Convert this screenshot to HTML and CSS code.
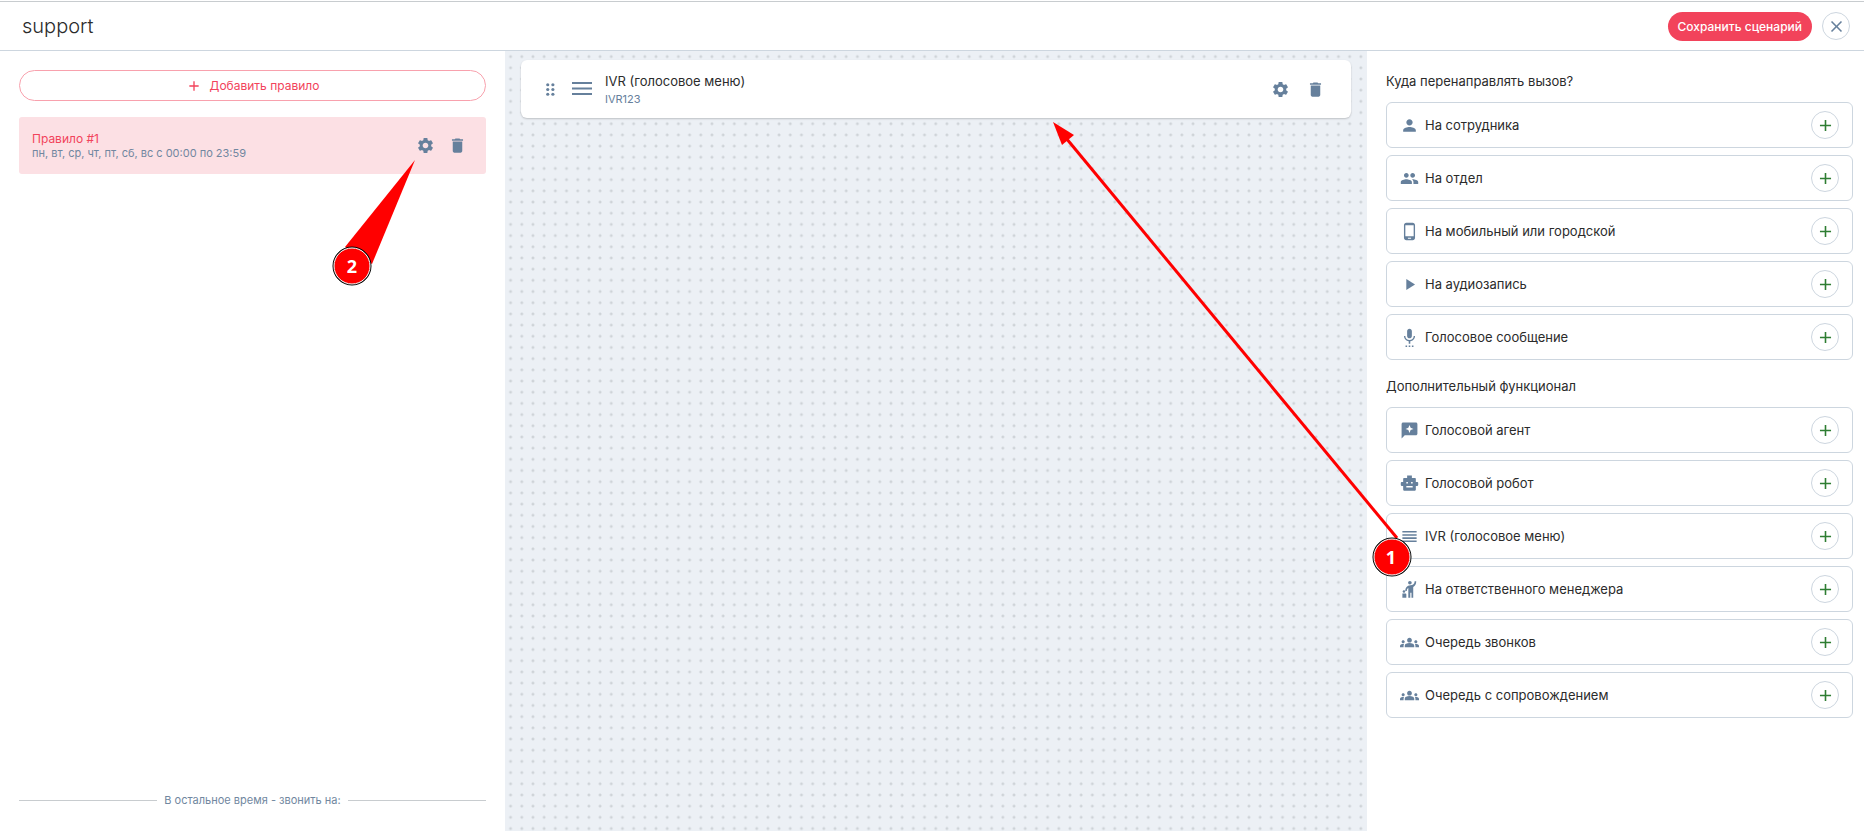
FILE: index.html
```html
<!DOCTYPE html>
<html lang="ru">
<head>
    <meta charset="UTF-8">
    <meta name="viewport" content="width=device-width, initial-scale=1.0">
    <title>support</title>
    <link rel="stylesheet" href="styles.css">
</head>
<body>
    <!-- Icon set -->
    <svg class="sprite" aria-hidden="true">
        <symbol id="settings" viewBox="0 0 24 24"><path d="M19.14 12.94c.04-.3.06-.61.06-.94 0-.32-.02-.64-.07-.94l2.03-1.58c.18-.14.23-.41.12-.61l-1.92-3.32c-.12-.22-.37-.29-.59-.22l-2.39.96c-.5-.38-1.03-.7-1.62-.94l-.36-2.54c-.04-.24-.24-.41-.48-.41h-3.84c-.24 0-.43.17-.47.41l-.36 2.54c-.59.24-1.13.57-1.62.94l-2.39-.96c-.22-.08-.47 0-.59.22L2.74 8.87c-.12.21-.08.47.12.61l2.03 1.58c-.05.3-.09.63-.09.94s.02.64.07.94l-2.03 1.58c-.18.14-.23.41-.12.61l1.92 3.32c.12.22.37.29.59.22l2.39-.96c.5.38 1.03.7 1.62.94l.36 2.54c.05.24.24.41.48.41h3.84c.24 0 .44-.17.47-.41l.36-2.54c.59-.24 1.13-.56 1.62-.94l2.39.96c.22.08.47 0 .59-.22l1.92-3.32c.12-.22.07-.47-.12-.61l-2.01-1.58zM12 15.6c-1.98 0-3.6-1.62-3.6-3.6s1.62-3.6 3.6-3.6 3.6 1.62 3.6 3.6-1.62 3.6-3.6 3.6z"/></symbol>
        <symbol id="delete" viewBox="0 0 24 24"><path d="M6 19c0 1.100.9 2 2 2h8c1.100 0 2-.9 2-2V7H6v12zM19 4h-3.500l-1-1h-5l-1 1H5v2h14V4z"/></symbol>
        <symbol id="add" viewBox="0 0 24 24"><path d="M19 13h-6v6h-2v-6H5v-2h6V5h2v6h6v2z"/></symbol>
        <symbol id="close" viewBox="0 0 24 24"><path d="M19 6.410 17.590 5 12 10.590 6.410 5 5 6.410 10.590 12 5 17.590 6.410 19 12 13.410 17.590 19 19 17.590 13.410 12z"/></symbol>
        <symbol id="drag" viewBox="0 0 24 24"><circle cx="8.500" cy="6" r="2"/><circle cx="15" cy="6" r="2"/><circle cx="8.500" cy="12" r="2"/><circle cx="15" cy="12" r="2"/><circle cx="8.500" cy="18" r="2"/><circle cx="15" cy="18" r="2"/></symbol>
        <symbol id="menu" viewBox="0 0 24 24"><path d="M2 16v2h20v-2H2zm0-5.500v2h20v-2H2zm0-5.500v2h20V5H2z"/></symbol>
        <symbol id="headline" viewBox="0 0 24 24"><path d="M3 15h18v-2H3v2zm0 4h18v-2H3v2zm0-8h18V9H3v2zm0-6v2h18V5H3z"/></symbol>
        <symbol id="person" viewBox="0 0 24 24"><path d="M12 12c2.210 0 4-1.790 4-4s-1.790-4-4-4-4 1.790-4 4 1.790 4 4 4zm0 2c-2.670 0-8 1.340-8 4v2h16v-2c0-2.660-5.330-4-8-4z"/></symbol>
        <symbol id="people" viewBox="0 0 24 24"><path d="M16 11c1.660 0 2.990-1.340 2.990-3S17.660 5 16 5c-1.660 0-3 1.340-3 3s1.340 3 3 3zm-8 0c1.660 0 2.990-1.340 2.990-3S9.660 5 8 5C6.340 5 5 6.340 5 8s1.340 3 3 3zm0 2c-2.330 0-7 1.170-7 3.500V19h14v-2.500c0-2.330-4.670-3.500-7-3.500zm8 0c-.29 0-.62.020-.97.050 1.160.84 1.970 1.970 1.970 3.450V19h6v-2.500c0-2.330-4.670-3.500-7-3.500z"/></symbol>
        <symbol id="phone" viewBox="0 0 24 24"><path d="M16 1H8C6.340 1 5 2.340 5 4v16c0 1.660 1.340 3 3 3h8c1.660 0 3-1.340 3-3V4c0-1.660-1.340-3-3-3zm-2 20h-4v-1h4v1zm3.250-3H6.750V4h10.500v14z"/></symbol>
        <symbol id="play" viewBox="0 0 24 24"><path d="M8 5v14l11-7z"/></symbol>
        <symbol id="voice" viewBox="0 0 24 24"><path d="M12 13c1.660 0 2.990-1.340 2.990-3L15 4c0-1.660-1.340-3-3-3S9 2.340 9 4v6c0 1.660 1.340 3 3 3zm-5 9h2v2H7v-2zm4 0h2v2h-2v-2zm4 0h2v2h-2v-2zM19 10h-1.700c0 3-2.540 5.100-5.300 5.100S6.700 13 6.700 10H5c0 3.410 2.720 6.230 6 6.720V20h2v-3.280c3.280-.49 6-3.310 6-6.720z"/></symbol>
        <symbol id="agent" viewBox="0 0 24 24"><path d="M20 2H4c-1.100 0-2 .9-2 2v18l4-4h14c1.100 0 2-.9 2-2V4c0-1.100-.9-2-2-2zm-6.570 9.430L12 15l-1.430-3.570L7 10l3.570-1.430L12 5l1.430 3.570L17 10l-3.570 1.430z"/></symbol>
        <symbol id="robot" viewBox="0 0 24 24"><path fill-rule="evenodd" d="M9 2h6v3h4c.6 0 1 .4 1 1v4h2c.6 0 1 .4 1 1v3c0 .6-.4 1-1 1h-2v5c0 .6-.4 1-1 1H5c-.6 0-1-.4-1-1v-5H2c-.6 0-1-.4-1-1v-3c0-.6.400-1 1-1h2V6c0-.6.4-1 1-1h4zM8 10v2h2v-2zm6 0v2h2v-2zM8 15v2h8v-2z"/></symbol>
        <symbol id="manager" viewBox="0 0 24 24"><circle cx="12.500" cy="3.500" r="2.300"/><path d="M18.500 1.500h2c0 3.500-1.300 6.100-3.800 7.300V22.500h-2.200V16h-1.500v6.500h-2.500V10.200c-1.200.6-1.900 1.900-1.900 3.800h-2c0-4.500 2.300-7.200 6.400-7.500 3.400-.2 5.500-1.300 5.500-5z"/><circle cx="5" cy="14.500" r="1.600"/><path d="M3 17h3.700c.8 0 1.300.5 1.300 1.300v4.200H3z"/></symbol>
        <symbol id="groups" viewBox="0 0 24 24"><path d="M12 12.750c1.630 0 3.070.39 4.240.9 1.080.48 1.760 1.560 1.760 2.730V18H6v-1.610c0-1.180.68-2.260 1.760-2.730 1.170-.52 2.610-.91 4.240-.91zM4 13c1.100 0 2-.9 2-2s-.9-2-2-2-2 .9-2 2 .9 2 2 2zm1.130 1.100c-.37-.06-.74-.1-1.130-.1-.99 0-1.930.21-2.780.58C.48 14.900 0 15.620 0 16.430V18h4.500v-1.610c0-.83.23-1.610.63-2.290zM20 13c1.100 0 2-.9 2-2s-.9-2-2-2-2 .9-2 2 .9 2 2 2zm4 3.430c0-.81-.48-1.530-1.220-1.850-.85-.37-1.790-.58-2.780-.58-.39 0-.76.040-1.130.1.400.68.630 1.460.63 2.290V18H24v-1.570zM12 6c1.660 0 3 1.340 3 3s-1.340 3-3 3-3-1.340-3-3 1.340-3 3-3z"/></symbol>
    </svg>

    <header class="header">
        <h1 class="title">support</h1>
        <div class="header-actions">
            <button class="save-button">Сохранить сценарий</button>
            <button class="round-button" aria-label="Закрыть"><svg class="icon"><use href="#close"/></svg></button>
        </div>
    </header>

    <main class="layout">
        <section class="rules">
            <button class="add-rule"><svg class="icon-small"><use href="#add"/></svg>Добавить правило</button>

            <div class="rule">
                <div class="rule-text">
                    <div class="rule-name">Правило #1</div>
                    <div class="rule-time">пн, вт, ср, чт, пт, сб, вс с 00:00 по 23:59</div>
                </div>
                <button class="icon-button" aria-label="Настройки"><svg class="icon"><use href="#settings"/></svg></button>
                <button class="icon-button" aria-label="Удалить"><svg class="icon"><use href="#delete"/></svg></button>
            </div>

            <div class="other-time">В остальное время - звонить на:</div>
        </section>

        <section class="canvas">
            <article class="step">
                <svg class="icon"><use href="#drag"/></svg>
                <svg class="icon-large"><use href="#menu"/></svg>
                <div class="step-text">
                    <div class="step-name">IVR (голосовое меню)</div>
                    <div class="step-value">IVR123</div>
                </div>
                <button class="icon-button" aria-label="Настройки"><svg class="icon"><use href="#settings"/></svg></button>
                <button class="icon-button" aria-label="Удалить"><svg class="icon"><use href="#delete"/></svg></button>
            </article>
        </section>

        <aside class="actions">
            <h2 class="actions-title">Куда перенаправлять вызов?</h2>
            <ul class="actions-list">
                <li class="action"><svg class="icon"><use href="#person"/></svg><span class="action-name">На сотрудника</span><button class="round-button add" aria-label="Добавить"><svg class="icon"><use href="#add"/></svg></button></li>
                <li class="action"><svg class="icon"><use href="#people"/></svg><span class="action-name">На отдел</span><button class="round-button add" aria-label="Добавить"><svg class="icon"><use href="#add"/></svg></button></li>
                <li class="action"><svg class="icon"><use href="#phone"/></svg><span class="action-name">На мобильный или городской</span><button class="round-button add" aria-label="Добавить"><svg class="icon"><use href="#add"/></svg></button></li>
                <li class="action"><svg class="icon"><use href="#play"/></svg><span class="action-name">На аудиозапись</span><button class="round-button add" aria-label="Добавить"><svg class="icon"><use href="#add"/></svg></button></li>
                <li class="action"><svg class="icon"><use href="#voice"/></svg><span class="action-name">Голосовое сообщение</span><button class="round-button add" aria-label="Добавить"><svg class="icon"><use href="#add"/></svg></button></li>
            </ul>

            <h2 class="actions-title">Дополнительный функционал</h2>
            <ul class="actions-list">
                <li class="action"><svg class="icon"><use href="#agent"/></svg><span class="action-name">Голосовой агент</span><button class="round-button add" aria-label="Добавить"><svg class="icon"><use href="#add"/></svg></button></li>
                <li class="action"><svg class="icon"><use href="#robot"/></svg><span class="action-name">Голосовой робот</span><button class="round-button add" aria-label="Добавить"><svg class="icon"><use href="#add"/></svg></button></li>
                <li class="action"><svg class="icon"><use href="#headline"/></svg><span class="action-name">IVR (голосовое меню)</span><button class="round-button add" aria-label="Добавить"><svg class="icon"><use href="#add"/></svg></button></li>
                <li class="action"><svg class="icon"><use href="#manager"/></svg><span class="action-name">На ответственного менеджера</span><button class="round-button add" aria-label="Добавить"><svg class="icon"><use href="#add"/></svg></button></li>
                <li class="action"><svg class="icon"><use href="#groups"/></svg><span class="action-name">Очередь звонков</span><button class="round-button add" aria-label="Добавить"><svg class="icon"><use href="#add"/></svg></button></li>
                <li class="action"><svg class="icon"><use href="#groups"/></svg><span class="action-name">Очередь с сопровождением</span><button class="round-button add" aria-label="Добавить"><svg class="icon"><use href="#add"/></svg></button></li>
            </ul>
        </aside>
    </main>

    <!-- Numbered hints over the page -->
    <svg class="hints" viewBox="0 0 1864 831">
        <path class="hint-line" d="M1397 538 1066 138"/>
        <path class="hint-fill" d="M1053 122l21 13-12 10z"/>
        <path class="hint-fill" d="M415 160 345 247 372 264z"/>
        <circle class="hint-ring" cx="1392" cy="557" r="19"/>
        <circle class="hint-dot" cx="1392" cy="557" r="18"/>
        <text class="hint-number" x="1391" y="564">1</text>
        <circle class="hint-ring" cx="352" cy="266" r="19"/>
        <circle class="hint-dot" cx="352" cy="266" r="18"/>
        <text class="hint-number" x="352" y="273">2</text>
    </svg>
</body>
</html>
```
FILE: styles.css
```css
* {
    box-sizing: border-box;
}

body {
    font-family: Inter, "Noto Sans", sans-serif;
    font-size: 13px;
    margin: 0;
    display: flex;
    flex-direction: column;
    min-height: 100vh;
    color: #2b2b2b;
    background-color: #fff;
    border-top: 1px solid transparent;
}

button {
    font-family: inherit;
    padding: 0;
    border: none;
    background: none;
    cursor: pointer;
}

.sprite {
    display: none;
}

.icon {
    width: 19px;
    height: 19px;
    flex: none;
    fill: #66809c;
}

.icon-small {
    width: 16px;
    height: 16px;
    fill: #f2435b;
}

.icon-large {
    width: 24px;
    height: 24px;
    flex: none;
    fill: #66809c;
}

.header {
    display: flex;
    align-items: center;
    justify-content: space-between;
    height: 50px;
    padding: 0 14px 0 22px;
    border-top: 1px solid #c8cccf;
    border-bottom: 1px solid #cdd6df;
}

.title {
    margin: 0;
    font-size: 20px;
    font-weight: 300;
}

.header-actions {
    display: flex;
    align-items: center;
    gap: 10px;
}

.save-button {
    height: 29px;
    padding: 0 10px;
    border-radius: 15px;
    color: #fff;
    font-size: 12px;
    font-weight: 500;
    background-color: #f2435b;
}

.round-button {
    display: flex;
    align-items: center;
    justify-content: center;
    width: 28px;
    height: 28px;
    border: 1px solid #cdd6df;
    border-radius: 50%;
    background-color: #fff;
}

.add .icon {
    fill: #2e7d32;
}

.layout {
    flex: 1;
    display: grid;
    grid-template-columns: 505px 1fr 497px;
}

.rules {
    display: flex;
    flex-direction: column;
    gap: 16px;
    padding: 19px 19px 23px;
}

.add-rule {
    display: flex;
    align-items: center;
    justify-content: center;
    gap: 8px;
    height: 31px;
    border: 1px solid #f8a1ad;
    border-radius: 16px;
    color: #f2435b;
    font-size: 12px;
}

.rule {
    display: flex;
    align-items: center;
    gap: 13px;
    height: 57px;
    padding: 0 19px 0 13px;
    border-radius: 3px;
    background-color: #fce0e4;
}

.rule-text {
    flex: 1;
    line-height: 15px;
}

.rule-name {
    color: #f2435b;
    font-size: 12px;
}

.rule-time {
    color: #7187a0;
    font-size: 11px;
}

.icon-button {
    display: flex;
}

.other-time {
    display: flex;
    align-items: center;
    gap: 7px;
    margin-top: auto;
    color: #7187a0;
    font-size: 11px;
    line-height: 16px;
}

.other-time::before,
.other-time::after {
    content: "";
    flex: 1;
    height: 1px;
    background-color: #c8cccf;
}

.canvas {
    padding: 9px 16px;
    background-color: #ecf0f5;
    background-image: radial-gradient(circle, #c0c5c9, transparent 2px);
    background-size: 0.7rem 0.7rem;
}

.step {
    display: flex;
    align-items: center;
    height: 58px;
    padding: 0 26px 0 20px;
    border-radius: 6px;
    background-color: #fff;
    box-shadow: 0 1px 2px rgba(0, 0, 0, 0.2);
}

.step .icon-large {
    margin-left: 10px;
}

.step-text {
    flex: 1;
    margin-left: 11px;
    padding-top: 2px;
}

.step-name {
    line-height: 18px;
}

.step-value {
    color: #66809c;
    font-size: 11px;
    line-height: 18px;
}

.step .icon-button + .icon-button {
    margin-left: 16px;
}

.actions {
    padding: 20px 11px 20px 19px;
}

.actions-title {
    margin: 0 0 10px;
    font-size: 13px;
    font-weight: 400;
    line-height: 21px;
}

.actions-list {
    display: flex;
    flex-direction: column;
    gap: 7px;
    margin: 0 0 16px;
    padding: 0;
    list-style: none;
}

.action {
    display: flex;
    align-items: center;
    gap: 6px;
    height: 46px;
    padding: 0 13px;
    border: 1px solid #cdd6df;
    border-radius: 6px;
}

.action-name {
    flex: 1;
}

.hints {
    position: absolute;
    top: 0;
    left: 0;
    width: 100%;
    pointer-events: none;
}

.hint-line {
    stroke: #f00;
    stroke-width: 3;
}

.hint-fill,
.hint-dot {
    fill: #f00;
}

.hint-dot {
    stroke: #fff;
    stroke-width: 1;
}

.hint-ring {
    fill: #000;
    stroke: #000;
    stroke-width: 1;
}

.hint-number {
    fill: #fff;
    font-family: "Noto Sans", sans-serif;
    font-size: 18px;
    font-weight: 700;
    text-anchor: middle;
}
```
